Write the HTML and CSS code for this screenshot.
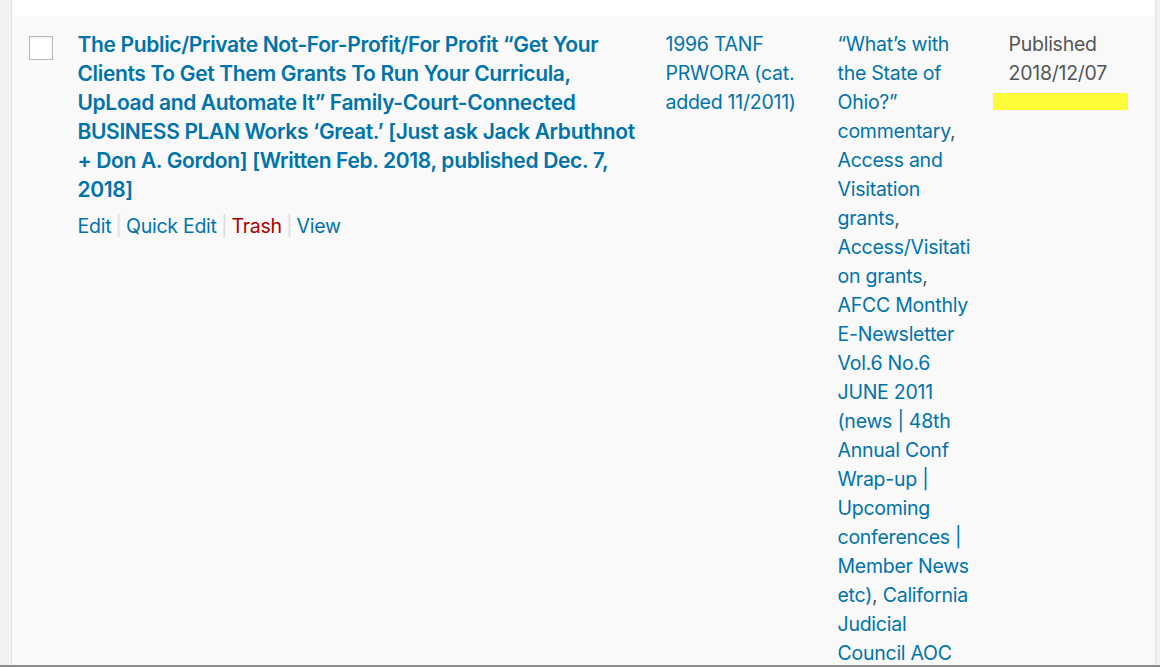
FILE: index.html
```html
<!DOCTYPE html>
<html lang="en">
<head>
<meta charset="utf-8">
<title>Posts</title>
<link rel="stylesheet" href="styles.css">
</head>
<body>
<div class="wrap">
  <table class="posts">
    <colgroup>
      <col class="c-check">
      <col class="c-title">
      <col class="c-author">
      <col class="c-cats">
      <col class="c-date">
    </colgroup>
    <tbody>
      <tr class="row prev">
        <td class="check"></td>
        <td class="title"></td>
        <td class="author"></td>
        <td class="cats nowrap"><a href="#">Family Courts</a>,</td>
        <td class="date"></td>
      </tr>
      <tr class="row alt">
        <td class="check"><span class="box"></span></td>
        <td class="title">
          <strong class="title-text"><a class="row-title" href="#">The Public/Private Not-For-Profit/For Profit “Get Your Clients To Get Them Grants To Run Your Curricula, UpLoad and Automate It” Family-Court-Connected BUSINESS PLAN Works ‘Great.’ [Just ask Jack Arbuthnot + Don A. Gordon] [Written Feb. 2018, published Dec. 7, 2018]</a></strong>
          <div class="row-actions">
            <a href="#">Edit</a> <span class="sep">|</span> <a href="#">Quick&nbsp;Edit</a> <span class="sep">|</span> <a class="trash" href="#">Trash</a> <span class="sep">|</span> <a href="#">View</a>
          </div>
        </td>
        <td class="author"><a href="#">1996 TANF PRWORA (cat. added 11/2011)</a></td>
        <td class="cats"><a href="#">“What’s with the State of Ohio?” commentary</a>, <a href="#">Access and Visitation grants</a>, <a href="#">Access/Visitation grants</a>, <a href="#">AFCC Monthly E-Newsletter Vol.6 No.6 JUNE 2011 (news | 48th Annual Conf Wrap-up | Upcoming conferences | Member News etc)</a>, <a href="#">California Judicial Council AOC (Administrative Office of the Courts)</a>, <a href="#">Child Support Enforcement</a>, <a href="#">Fatherhood Initiatives</a></td>
        <td class="date">
          <div>Published<br>2018/12/07</div>
          <div class="mark"></div>
        </td>
      </tr>
    </tbody>
  </table>
</div>
</body>
</html>
```
FILE: styles.css
```css
html, body {
  margin: 0;
  padding: 0;
  height: 100%;
  overflow: hidden;
}
body {
  background: #f1f1f1;
  font-family: Inter, "Noto Sans", sans-serif;
  font-size: 19.5px;
  line-height: 29px;
  letter-spacing: -0.25px;
  color: #555;
}
body::after {
  content: "";
  position: fixed;
  left: 0;
  right: 0;
  bottom: 0;
  height: 2px;
  background: #8c8c8c;
}
.wrap {
  padding: 0 5px 0 11px;
}
.posts {
  width: 1144px;
  margin-top: -39.25px;
  border-collapse: collapse;
  table-layout: fixed;
  border-left: 1px solid #e2e4e7;
  border-right: 1px solid #e2e4e7;
}
.c-check { width: 51px; }
.c-title { width: 588px; }
.c-author { width: 172px; }
.c-cats { width: 170px; }
.c-date { width: 163px; }

.row td {
  vertical-align: top;
  padding: 14px 8px 12.25px 15px;
  word-wrap: break-word;
  overflow-wrap: break-word;
}
.row.prev { background: #fff; }
.row.alt { background: #f9f9f9; }
.nowrap { white-space: nowrap; }

td.check { padding-left: 17px; padding-top: 20px; }
td.title { padding-right: 6px; }
td.cats { padding-right: 17px; }
td.date { padding-left: 16px; padding-right: 0; }

a {
  color: #0073aa;
  text-decoration: none;
}
.box {
  display: block;
  width: 22px;
  height: 22px;
  border: 1px solid #b4b9be;
  background: #fff;
  box-shadow: inset 0 1px 2px rgba(0,0,0,0.08);
}
.title-text {
  display: block;
  font-size: 21px;
  line-height: 29px;
  font-weight: 600;
  letter-spacing: -0.35px;
}
.row-actions {
  margin-top: 8px;
}
.row-actions .sep {
  color: #ddd;
  margin: 0 -1px;
}
.row-actions .trash {
  color: #a00;
}
.mark {
  margin: 5px 0 0 -16px;
  width: 135px;
  height: 17px;
  background: #fcfc38;
}
```
